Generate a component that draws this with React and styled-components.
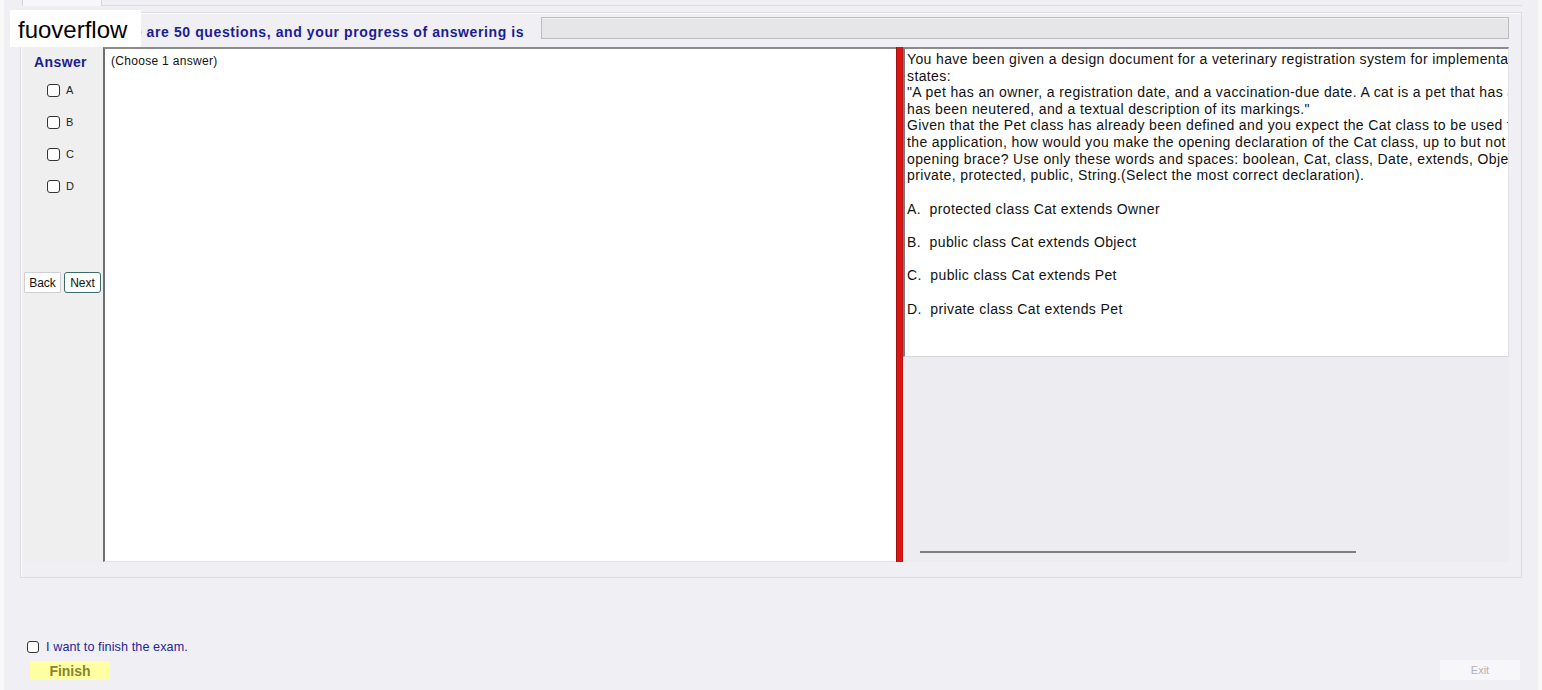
import React from "react";
import styled, { createGlobalStyle } from "styled-components";

const GlobalStyle = createGlobalStyle`
  html, body {
    margin: 0;
    padding: 0;
    background: #f8f8f9;
  }
  body {
    font-family: "Liberation Sans", Arial, sans-serif;
  }
`;

const QUESTION_LINES = [
  "You have been given a design document for a veterinary registration system for implementation in Java. It",
  "states:",
  "\"A pet has an owner, a registration date, and a vaccination-due date. A cat is a pet that has a flag indicating whether it",
  "has been neutered, and a textual description of its markings.\"",
  "Given that the Pet class has already been defined and you expect the Cat class to be used freely throughout",
  "the application, how would you make the opening declaration of the Cat class, up to but not including the first",
  "opening brace? Use only these words and spaces: boolean, Cat, class, Date, extends, Object, Owner, Pet,",
  "private, protected, public, String.(Select the most correct declaration).",
];

const OPTIONS = [
  { key: "A", text: "protected class Cat extends Owner" },
  { key: "B", text: "public class Cat extends Object" },
  { key: "C", text: "public class Cat extends Pet" },
  { key: "D", text: "private class Cat extends Pet" },
];

const App = () => {
  return (
    <Screen>
      <GlobalStyle />
      <Window>
        <Watermark>fuoverflow</Watermark>
        <TabStrip>
          <Tab />
          <TabLine />
        </TabStrip>
        <Panel>
          <Header>
            <HeaderLabel>There are 50 questions, and your progress of answering is</HeaderLabel>
            <Progress />
          </Header>
          <Content>
            <AnswerColumn>
              <AnswerTitle>Answer</AnswerTitle>
              {OPTIONS.map((o) => (
                <CheckRow key={o.key}>
                  <Box />
                  <CheckLabel>{o.key}</CheckLabel>
                </CheckRow>
              ))}
              <NavRow>
                <NavButton>Back</NavButton>
                <NavButton $focused>Next</NavButton>
              </NavRow>
            </AnswerColumn>
            <ChoosePanel>(Choose 1 answer)</ChoosePanel>
            <Splitter />
            <QuestionSide>
              <QuestionBox>
                {QUESTION_LINES.map((line, i) => (
                  <QLine key={i}>{line}</QLine>
                ))}
                {OPTIONS.map((o) => (
                  <OptionLine key={o.key}>
                    {o.key}.{"  "}
                    {o.text}
                  </OptionLine>
                ))}
              </QuestionBox>
              <QuestionFooter>
                <ScrollTrack />
              </QuestionFooter>
            </QuestionSide>
          </Content>
        </Panel>
        <Bottom>
          <FinishGroup>
            <FinishCheckRow>
              <FinishBox />
              <FinishText>I want to finish the exam.</FinishText>
            </FinishCheckRow>
            <FinishButton>Finish</FinishButton>
          </FinishGroup>
          <ExitButton>Exit</ExitButton>
        </Bottom>
      </Window>
    </Screen>
  );
};

const Screen = styled.div`
  width: 1542px;
  height: 690px;
  display: flex;
  overflow: hidden;
`;

const Window = styled.div`
  position: relative;
  flex: 1;
  margin-left: 4px;
  margin-right: 4px;
  padding: 0 16px 0 16px;
  background: #f0f0f4;
  display: flex;
  flex-direction: column;
`;

const Watermark = styled.div`
  position: absolute;
  left: 6px;
  top: 10px;
  width: 131px;
  height: 37px;
  box-sizing: border-box;
  padding: 3px 0 0 8px;
  background: #ffffff;
  color: #000;
  font-size: 24px;
  line-height: 34px;
  z-index: 2;
`;

const TabStrip = styled.div`
  height: 6px;
  display: flex;
  margin-bottom: 6px;
`;

const Tab = styled.div`
  width: 78px;
  margin-left: 2px;
  height: 6px;
  background: #f7f7f9;
  border-left: 1px solid #d6d6da;
  border-right: 1px solid #d6d6da;
`;

const TabLine = styled.div`
  flex: 1;
  border-bottom: 1px solid #dcdce0;
`;

const Panel = styled.div`
  height: 566px;
  box-sizing: border-box;
  border: 1px solid #dcdce0;
  box-shadow: inset 1px 1px 0 #fafafc;
  padding: 0 12px 0 3px;
  display: flex;
  flex-direction: column;
`;

const Header = styled.div`
  height: 34px;
  display: flex;
  align-items: flex-start;
`;

const HeaderLabel = styled.div`
  width: 517px;
  flex-shrink: 0;
  box-sizing: border-box;
  padding: 11px 0 0 77px;
  font-size: 14px;
  letter-spacing: 0.6px;
  line-height: 16px;
  font-weight: bold;
  color: #1c1c94;
  white-space: nowrap;
  overflow: hidden;
`;

const Progress = styled.div`
  flex: 1;
  margin-top: 4px;
  height: 22px;
  box-sizing: border-box;
  background: #e6e6e8;
  border: 1px solid #bdbdc0;
  box-shadow: inset 0 1px 0 #f2f2f2;
`;

const Content = styled.div`
  height: 515px;
  display: flex;
`;

const AnswerColumn = styled.div`
  width: 79px;
  flex-shrink: 0;
  background: #efeff0;
  display: flex;
  flex-direction: column;
`;

const AnswerTitle = styled.div`
  margin-top: 7px;
  padding-left: 10px;
  height: 16px;
  line-height: 16px;
  font-size: 14px;
  letter-spacing: 0.4px;
  font-weight: bold;
  color: #1c1c94;
  margin-bottom: 4px;
`;

const CheckRow = styled.div`
  height: 32px;
  display: flex;
  align-items: center;
  padding-left: 23px;
`;

const Box = styled.span`
  width: 13px;
  height: 13px;
  box-sizing: border-box;
  border: 1px solid #333;
  border-radius: 3px;
  background: #fff;
`;

const CheckLabel = styled.span`
  margin-left: 6px;
  font-size: 11px;
  color: #222;
`;

const NavRow = styled.div`
  margin-top: 70px;
  display: flex;
  gap: 3px;
`;

const NavButton = styled.div`
  width: 37px;
  height: 21px;
  box-sizing: border-box;
  display: flex;
  align-items: center;
  justify-content: center;
  font-size: 12px;
  color: #111;
  background: #fdfdfd;
  border: 1px solid ${(p) => (p.$focused ? "#3d6b6b" : "#cfcfd2")};
  border-radius: ${(p) => (p.$focused ? "3px" : "1px")};
`;

const ChoosePanel = styled.div`
  width: 793px;
  flex-shrink: 0;
  box-sizing: border-box;
  background: #fff;
  border-top: 2px solid #8c8c8c;
  border-left: 2px solid #6e6e6e;
  border-bottom: 1px solid #e2e2e4;
  padding: 5px 0 0 6px;
  font-size: 12px;
  letter-spacing: 0.3px;
  line-height: 14px;
  color: #111;
`;

const Splitter = styled.div`
  width: 7px;
  flex-shrink: 0;
  box-sizing: border-box;
  background: #dc1414;
  border-left: 1px solid #a01010;
  border-right: 1px solid #b81818;
`;

const QuestionSide = styled.div`
  width: 606px;
  flex-shrink: 0;
  display: flex;
  flex-direction: column;
  background: #ededf1;
`;

const QuestionBox = styled.div`
  height: 310px;
  box-sizing: border-box;
  background: #fff;
  border-top: 2px solid #8c8c8c;
  border-left: 2px solid #7a7a7a;
  border-right: 1px solid #e2e2e6;
  border-bottom: 1px solid #dadade;
  padding: 2px 0 0 2px;
  overflow: hidden;
  font-size: 14px;
  letter-spacing: 0.38px;
  line-height: 16.6px;
  color: #111;
`;

const QLine = styled.div`
  white-space: nowrap;
`;

const OptionLine = styled.div`
  white-space: pre;
  margin-top: 16.8px;
`;

const QuestionFooter = styled.div`
  flex: 1;
  display: flex;
  align-items: flex-end;
  padding: 0 0 9px 17px;
`;

const ScrollTrack = styled.div`
  width: 436px;
  height: 2px;
  background: #7e7e86;
`;

const Bottom = styled.div`
  flex: 1;
  display: flex;
  justify-content: space-between;
  align-items: flex-end;
  padding-bottom: 10px;
`;

const FinishGroup = styled.div`
  display: flex;
  flex-direction: column;
`;

const FinishCheckRow = styled.div`
  display: flex;
  align-items: center;
  margin-left: 7px;
  height: 14px;
`;

const FinishBox = styled.span`
  width: 12px;
  height: 12px;
  box-sizing: border-box;
  border: 1px solid #333;
  border-radius: 3px;
  background: #fff;
`;

const FinishText = styled.span`
  margin-left: 7px;
  font-size: 12.6px;
  letter-spacing: 0.1px;
  color: #24249a;
`;

const FinishButton = styled.div`
  margin: 7px 0 0 10px;
  width: 80px;
  height: 19px;
  background: #ffffa4;
  display: flex;
  align-items: center;
  justify-content: center;
  font-size: 14px;
  font-weight: bold;
  color: #86862c;
`;

const ExitButton = styled.div`
  width: 80px;
  height: 20px;
  margin-right: 2px;
  background: #f7f7fa;
  display: flex;
  align-items: center;
  justify-content: center;
  font-size: 11px;
  color: #b2b2b6;
`;

export default App;
